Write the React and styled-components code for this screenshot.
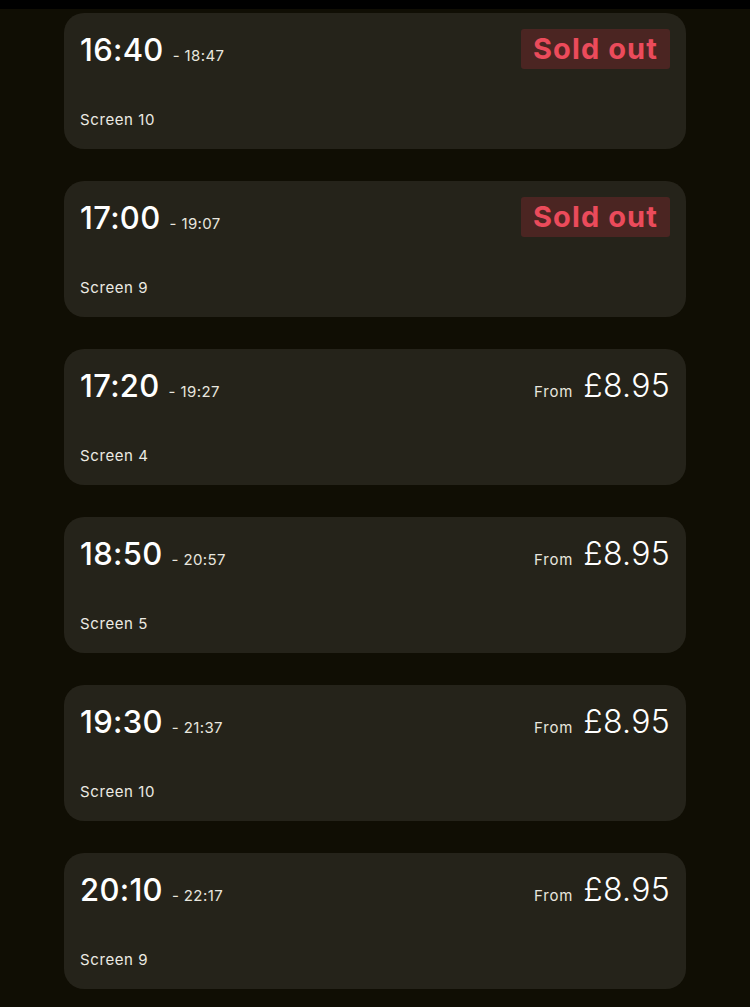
import styled, { createGlobalStyle } from 'styled-components';

const GlobalStyle = createGlobalStyle`
  body {
    margin: 0;
    background: #100e04;
    font-family: "Inter", "Liberation Sans", sans-serif;
    color: #fff;
  }
`;

const TopBar = styled.div`
  height: 9px;
  background: #000;
`;

const List = styled.div`
  display: flex;
  flex-direction: column;
  gap: 32px;
  padding: 4px 64px 20px;
`;

const Card = styled.div`
  height: 136px;
  box-sizing: border-box;
  background: #25231a;
  border-radius: 20px;
  padding: 16px 16px 20px;
  display: flex;
  flex-direction: column;
  justify-content: space-between;
`;

const Header = styled.div`
  display: flex;
  justify-content: space-between;
  align-items: center;
  height: 40px;
`;

const Times = styled.div`
  display: flex;
  align-items: baseline;
`;

const Start = styled.span`
  font-size: 31px;
  font-weight: 500;
  letter-spacing: 0.3px;
`;

const End = styled.span`
  font-size: 15px;
  margin-left: 9px;
  color: #e8e6df;
  letter-spacing: 0.4px;
`;

const SoldOut = styled.span`
  display: flex;
  align-items: center;
  height: 40px;
  box-sizing: border-box;
  background: #4b2522;
  color: #eb4b5b;
  font-size: 29px;
  font-weight: 700;
  letter-spacing: 1.1px;
  padding: 0 12px 2px;
  border-radius: 3px;
`;

const Price = styled.div`
  display: flex;
  align-items: baseline;
  gap: 10px;
`;

const From = styled.span`
  font-size: 15px;
  color: #e8e6df;
  letter-spacing: 0.8px;
`;

const Amount = styled.span`
  font-size: 32px;
  font-weight: 300;
  letter-spacing: 0.3px;
`;

const ScreenLabel = styled.div`
  font-size: 15px;
  color: #eceae3;
  letter-spacing: 0.6px;
`;

const shows = [
  { start: '16:40', end: '18:47', screen: 'Screen 10', soldOut: true },
  { start: '17:00', end: '19:07', screen: 'Screen 9', soldOut: true },
  { start: '17:20', end: '19:27', screen: 'Screen 4' },
  { start: '18:50', end: '20:57', screen: 'Screen 5' },
  { start: '19:30', end: '21:37', screen: 'Screen 10' },
  { start: '20:10', end: '22:17', screen: 'Screen 9' },
];

const App = () => (
  <>
    <GlobalStyle />
    <TopBar />
    <List>
      {shows.map((s) => (
        <Card key={s.start}>
          <Header>
            <Times>
              <Start>{s.start}</Start>
              <End>- {s.end}</End>
            </Times>
            {s.soldOut ? (
              <SoldOut>Sold out</SoldOut>
            ) : (
              <Price>
                <From>From</From>
                <Amount>£8.95</Amount>
              </Price>
            )}
          </Header>
          <ScreenLabel>{s.screen}</ScreenLabel>
        </Card>
      ))}
    </List>
  </>
);

export default App;
